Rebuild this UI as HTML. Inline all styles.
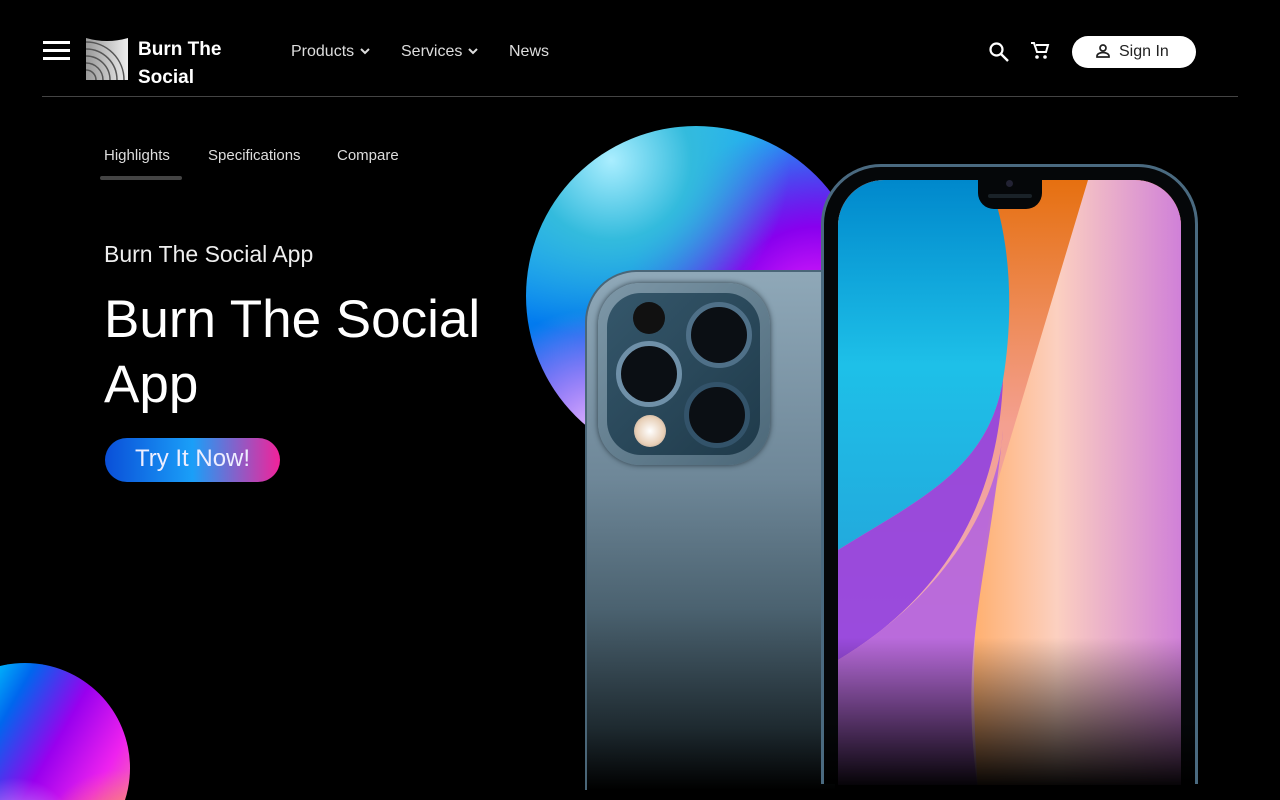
<!DOCTYPE html>
<html style="width:1280px;height:800px;overflow:hidden"><head><meta charset="utf-8"><style>
*{margin:0;padding:0;box-sizing:border-box}
html,body{width:1280px;height:800px;overflow:hidden;background:#000}
body{font-family:"Liberation Sans",sans-serif;color:#fff}
#w{position:relative;width:1280px;height:800px;overflow:hidden}
.a{position:absolute}
.nav{font-size:16px;color:#ddd;top:43px}
.line{left:42px;top:96px;width:1196px;height:1px;background:#444}
.tab{top:147px;font-size:15px;color:#ddd}
.orb1{left:526px;top:126px;width:340px;height:340px;border-radius:50%;
background:radial-gradient(circle at 25% 10%,#aef 0%,#3bd 20%,transparent 45%),radial-gradient(circle at 85% 55%,#e2f 0%,#80e 25%,transparent 55%),radial-gradient(circle at 20% 90%,#dbf 0%,transparent 30%),linear-gradient(160deg,#3cf,#07e 45%,#50e 70%,#a0e)}
.orb2{left:-80px;top:0;width:210px;height:210px;border-radius:50%;
background:radial-gradient(circle at 45% 85%,#cbf 0%,transparent 30%),radial-gradient(circle at 95% 90%,#f94 0%,transparent 30%),linear-gradient(120deg,#0cf 20%,#06e 35%,#90e 55%,#e2e 75%,#fa7)}
</style></head><body><div id="w">
<div class="a" style="left:43px;top:41px;width:27px;height:3px;background:#fff;box-shadow:0 8px 0 #fff,0 16px 0 #fff"></div>
<svg class="a" style="left:86px;top:38px" width="42" height="42" viewBox="0 0 42 42">
<defs><linearGradient id="g" x1="0" x2="1"><stop offset="0" stop-color="#999"/><stop offset="1" stop-color="#eee"/></linearGradient></defs>
<path d="M0 0 Q21 6 42 0 V42 H0Z" fill="url(#g)"/>
<g fill="none" stroke="#555" stroke-width="1.5"><circle cx="0" cy="42" r="10"/><circle cx="0" cy="42" r="17"/><circle cx="0" cy="42" r="24"/><circle cx="0" cy="42" r="31"/><circle cx="0" cy="42" r="38"/></g></svg>
<div class="a" style="left:138px;top:36px;font-size:19px;font-weight:bold;line-height:28px">Burn The<br>Social</div>
<div class="a nav" style="left:291px">Products <svg width="12" height="10" viewBox="0 0 12 10"><path d="M2 3l4 4 4-4" stroke="#ddd" stroke-width="2" fill="none"/></svg></div>
<div class="a nav" style="left:401px">Services <svg width="12" height="10" viewBox="0 0 12 10"><path d="M2 3l4 4 4-4" stroke="#ddd" stroke-width="2" fill="none"/></svg></div>
<div class="a nav" style="left:509px">News</div>
<svg class="a" style="left:988px;top:41px" width="22" height="22" viewBox="0 0 22 22"><circle cx="8.5" cy="8.5" r="6" stroke="#fff" stroke-width="2.2" fill="none"/><path d="M13 13l7 7" stroke="#fff" stroke-width="2.4"/></svg>
<svg class="a" style="left:1030px;top:41px" width="20" height="20" viewBox="0 0 20 20"><path d="M1 2h3l3 9h9l2-7H6" stroke="#fff" stroke-width="2" fill="none"/><circle cx="7" cy="16" r="1.8" fill="#fff"/><circle cx="15" cy="16" r="1.8" fill="#fff"/></svg>
<div class="a" style="left:1072px;top:36px;width:124px;height:32px;border-radius:16px;background:#fff;color:#222;font-size:16px;line-height:32px;padding-left:47px">Sign In</div>
<svg class="a" style="left:1095px;top:43px" width="16" height="16" viewBox="0 0 16 16"><circle cx="8" cy="5" r="3" stroke="#222" stroke-width="1.7" fill="none"/><path d="M2 14v-1c0-2 3-3.5 6-3.5s6 1.5 6 3.5v1z" stroke="#222" stroke-width="1.7" fill="none"/></svg>
<div class="a line"></div>
<div class="a tab" style="left:104px">Highlights</div>
<div class="a tab" style="left:208px">Specifications</div>
<div class="a tab" style="left:337px">Compare</div>
<div class="a" style="left:100px;top:176px;width:82px;height:4px;border-radius:2px;background:#444"></div>
<div class="a" style="left:104px;top:241px;font-size:23px;color:#eee">Burn The Social App</div>
<div class="a" style="left:104px;top:287px;font-size:53px;line-height:65px">Burn The Social<br>App</div>
<div class="a" style="left:105px;top:438px;width:175px;height:44px;border-radius:22px;background:linear-gradient(90deg,#0a4fd8,#1a9ff8 50%,#f2229a);font-size:24px;line-height:42px;text-align:center;color:#eef">Try It Now!</div>
<div class="a orb1"></div>
<div class="a" style="left:0;top:663px;width:140px;height:137px;overflow:hidden"><div class="a orb2"></div></div>
<div class="a" style="left:585px;top:270px;width:250px;height:520px;border-radius:52px 0 0 0;border:2px solid #4a6678;border-right:none;border-bottom:none;background:linear-gradient(180deg,#8fa8b8 0%,#6e8798 40%,#4b6270 65%,#1e2a30 88%,#000 100%)"></div>
<div class="a" style="left:598px;top:283px;width:172px;height:182px;border-radius:42px;background:linear-gradient(135deg,#7e98a8,#4b6778);box-shadow:0 0 6px #2a3a44"></div>
<div class="a" style="left:607px;top:293px;width:153px;height:162px;border-radius:34px;background:linear-gradient(135deg,#35576b,#1f3a4a)"></div>
<div class="a" style="left:633px;top:302px;width:32px;height:32px;border-radius:50%;background:#111"></div>
<div class="a" style="left:686px;top:302px;width:66px;height:66px;border-radius:50%;background:#0b0f14;border:5px solid #4f7088"></div>
<div class="a" style="left:616px;top:341px;width:66px;height:66px;border-radius:50%;background:#0b0f14;border:5px solid #6f90a8"></div>
<div class="a" style="left:684px;top:382px;width:66px;height:66px;border-radius:50%;background:#0b0f14;border:5px solid #33536a"></div>
<div class="a" style="left:634px;top:415px;width:32px;height:32px;border-radius:50%;background:radial-gradient(#fff,#e8d0b8 60%,#a89080)"></div>
<div class="a" style="left:821px;top:164px;width:377px;height:620px;border-radius:60px 60px 0 0;border:3px solid #4a6a80;border-bottom:none;background:linear-gradient(180deg,#050709 90%,#000)"></div>
<div class="a" style="left:838px;top:180px;width:343px;height:605px;border-radius:46px 46px 0 0;overflow:hidden;background:linear-gradient(100deg,#f7a 0%,#f9c 60%,#b5e 100%)">
<svg width="343" height="610" viewBox="0 0 343 610" class="a" style="left:0;top:0">
<defs>
<linearGradient id="b" x1="0" y1="0" x2="0" y2="1"><stop offset="0" stop-color="#0088cc"/><stop offset=".5" stop-color="#1ec0e8"/><stop offset="1" stop-color="#2ad"/></linearGradient>
<linearGradient id="o" x1="0" y1="0" x2="0" y2="1"><stop offset="0" stop-color="#e67010"/><stop offset=".4" stop-color="#f4a090"/><stop offset="1" stop-color="#e8b0e0"/></linearGradient>
<linearGradient id="p" x1="0" y1="0" x2="1" y2="0"><stop offset="0" stop-color="#ffb070"/><stop offset=".4" stop-color="#fcd0c0"/><stop offset="1" stop-color="#d080d8"/></linearGradient>
<linearGradient id="f" x1="0" y1="0" x2="0" y2="1"><stop offset=".75" stop-color="#000" stop-opacity="0"/><stop offset="1" stop-color="#000"/></linearGradient>
</defs>
<rect width="343" height="610" fill="url(#o)"/>
<path d="M250 0 C220 100 190 200 160 300 C140 380 130 460 140 610 H343 V0Z" fill="url(#p)"/>
<path d="M0 0 H150 C175 60 175 140 165 200 C150 290 80 320 0 370Z" fill="url(#b)"/>
<path d="M0 370 C80 320 150 290 165 200 C160 330 100 420 0 480Z" fill="#9040e0" opacity=".9"/>
<path d="M0 480 C100 420 160 330 165 250 C150 400 120 470 140 610 H0Z" fill="#b060e0" opacity=".85"/>
<rect width="343" height="610" fill="url(#f)"/>
</svg>
</div>
<div class="a" style="left:978px;top:176px;width:64px;height:33px;border-radius:0 0 16px 16px;background:#050709"></div>
<div class="a" style="left:988px;top:194px;width:44px;height:4px;border-radius:2px;background:#1a2228"></div>
<div class="a" style="left:1006px;top:180px;width:7px;height:7px;border-radius:50%;background:#223"></div>
</div></body></html>
